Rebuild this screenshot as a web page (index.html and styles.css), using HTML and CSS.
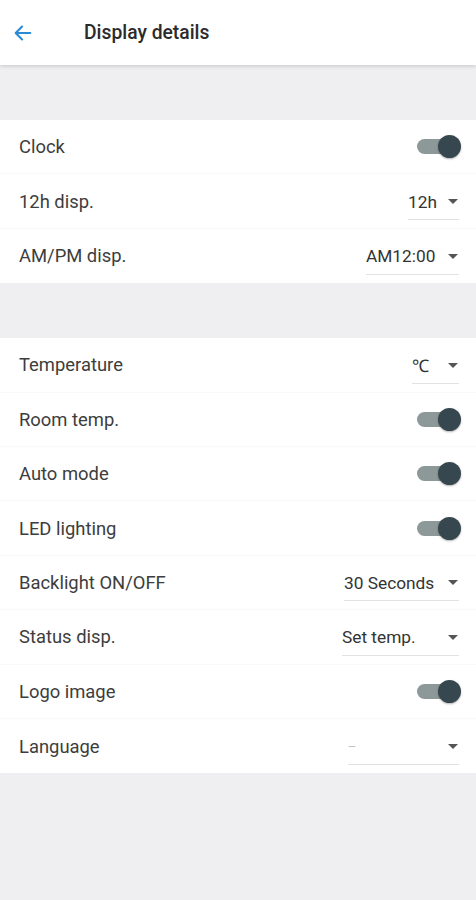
FILE: index.html
```html
<!DOCTYPE html>
<html lang="en">

<head>
    <meta charset="UTF-8">
    <meta name="viewport" content="width=device-width, initial-scale=1.0">
    <title>Display details</title>
    <link rel="stylesheet" href="styles.css">
</head>

<body>
    <header class="topbar">
        <svg class="back" width="22" height="22" viewBox="0 0 24 24">
            <path d="M20 12H5M11 5l-7 7 7 7" fill="none" stroke="#2a8ad4" stroke-width="2.2" stroke-linecap="round" stroke-linejoin="round"/>
        </svg>
        <h1>Display details</h1>
    </header>

    <main>
        <section class="group">
            <div class="row">
                <span class="label">Clock</span>
                <span class="toggle"><span class="knob"></span></span>
            </div>
            <div class="row">
                <span class="label">12h disp.</span>
                <span class="select w-12h"><span class="value">12h</span><span class="caret"></span></span>
            </div>
            <div class="row">
                <span class="label">AM/PM disp.</span>
                <span class="select w-ampm"><span class="value">AM12:00</span><span class="caret"></span></span>
            </div>
        </section>

        <section class="group">
            <div class="row">
                <span class="label">Temperature</span>
                <span class="select w-temp"><span class="value">℃</span><span class="caret"></span></span>
            </div>
            <div class="row">
                <span class="label">Room temp.</span>
                <span class="toggle"><span class="knob"></span></span>
            </div>
            <div class="row">
                <span class="label">Auto mode</span>
                <span class="toggle"><span class="knob"></span></span>
            </div>
            <div class="row">
                <span class="label">LED lighting</span>
                <span class="toggle"><span class="knob"></span></span>
            </div>
            <div class="row">
                <span class="label">Backlight ON/OFF</span>
                <span class="select w-backlight"><span class="value">30 Seconds</span><span class="caret"></span></span>
            </div>
            <div class="row">
                <span class="label">Status disp.</span>
                <span class="select w-status"><span class="value">Set temp.</span><span class="caret"></span></span>
            </div>
            <div class="row">
                <span class="label">Logo image</span>
                <span class="toggle"><span class="knob"></span></span>
            </div>
            <div class="row">
                <span class="label">Language</span>
                <span class="select w-lang"><span class="value dash">—</span><span class="caret"></span></span>
            </div>
        </section>
    </main>
</body>

</html>
```

FILE: styles.css
```css
* {
    margin: 0;
    padding: 0;
    box-sizing: border-box;
}

body {
    font-family: Roboto, "Noto Sans", Arial, sans-serif;
    background-color: #efeff2;
    color: #333;
}

.topbar {
    height: 65px;
    background-color: #fff;
    display: flex;
    align-items: center;
    padding-left: 12px;
    box-shadow: 0 1px 4px rgba(0, 0, 0, 0.18);
    position: relative;
}

.back {
    margin-right: 50px;
}

.topbar h1 {
    font-size: 19.3px;
    font-weight: 500;
    color: #2b2b2b;
}

main {
    padding-top: 55px;
    display: flex;
    flex-direction: column;
    gap: 55px;
}

.group {
    background-color: #fff;
}

.row {
    height: 54.4px;
    display: flex;
    justify-content: space-between;
    align-items: center;
    padding: 0 17px 0 19px;
    border-bottom: 1px solid #f9f9f9;
}

.row:last-child {
    border-bottom: none;
}

.label {
    font-size: 18.4px;
    color: #3d3d3d;
}

.toggle {
    width: 40px;
    height: 15px;
    border-radius: 8px;
    background-color: #8d9898;
    position: relative;
    margin-right: 2px;
}

.knob {
    position: absolute;
    right: -4px;
    top: -4px;
    width: 23px;
    height: 23px;
    border-radius: 50%;
    background-color: #37474f;
    box-shadow: 0 1px 2px rgba(0, 0, 0, 0.3);
}

.select {
    display: flex;
    justify-content: space-between;
    align-items: center;
    height: 30px;
    margin-top: 8px;
    padding-bottom: 6px;
    border-bottom: 1px solid #e2e2e2;
}

.value {
    font-size: 17.3px;
    color: #333;
}

.value.dash {
    font-size: 10px;
    color: #bbb;
}

.caret {
    width: 0;
    height: 0;
    border-left: 5px solid transparent;
    border-right: 5px solid transparent;
    border-top: 5px solid #555;
    margin-right: 1px;
}

.w-12h {
    width: 51px;
}

.w-temp {
    width: 47px;
}

.w-ampm {
    width: 93px;
}

.w-backlight {
    width: 115px;
}

.w-status {
    width: 117px;
}

.w-lang {
    width: 111px;
}
```
